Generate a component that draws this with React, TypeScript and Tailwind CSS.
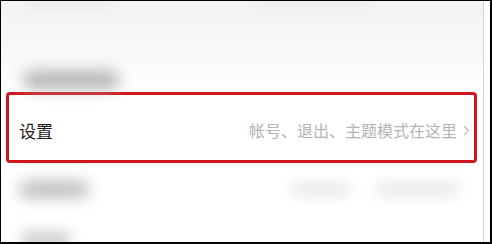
import React from 'react';

const Blob = ({ className }: { className: string }) => (
    <div className={`rounded-full ${className}`} />
);

const App = () => {
    return (
        <div
            className="w-[492px] h-[244px] flex overflow-hidden bg-white border-t border-l border-r-2 border-b-2 border-black"
            style={{ fontFamily: '"Noto Sans CJK SC", "Noto Sans", sans-serif' }}
        >
            <div className="w-[483px] flex flex-col border-r border-[#d4d4d6] bg-white">
                {/* blurred area above */}
                <div className="h-[91px] flex flex-col bg-gradient-to-b from-[#f2f3f5] via-[#f8f8fa] to-white">
                    <div className="flex items-start h-[10px]">
                        <Blob className="ml-[28px] w-[80px] h-[6px] bg-[#e4e4e6] blur-[6px]" />
                        <Blob className="ml-[150px] w-[110px] h-[6px] bg-[#e8e8ea] blur-[6px]" />
                    </div>
                    <Blob className="mt-auto mb-[4px] ml-[22px] w-[96px] h-[16px] bg-[#a8a8aa] blur-[8px]" />
                </div>

                {/* highlighted settings row */}
                <div className="ml-[5px] w-[471px] h-[71px] border-[3px] border-[#cf161c] rounded-[4px] flex items-center justify-between pl-[10px] pr-[4px] pt-[5px]">
                    <span className="text-[17px] text-[#1c1c1e] leading-none">设置</span>
                    <div className="flex items-center gap-[6px]">
                        <span className="text-[16px] text-[#b4b4b6] leading-none">帐号、退出、主题模式在这里</span>
                        <svg width="7" height="11" viewBox="0 0 7 11" fill="none">
                            <path d="M1 1l4.5 4.5L1 10" stroke="#bcbcbe" strokeWidth="1.2" />
                        </svg>
                    </div>
                </div>

                {/* blurred rows below */}
                <div className="mt-[16px] flex items-center h-[20px]">
                    <Blob className="ml-[18px] w-[70px] h-[15px] bg-[#b4b4b6] blur-[8px]" />
                    <Blob className="ml-[202px] w-[60px] h-[12px] bg-[#e6e6e8] blur-[7px]" />
                    <Blob className="ml-[24px] w-[85px] h-[12px] bg-[#e6e6e8] blur-[7px]" />
                </div>
                <div className="mt-auto -mb-[4px] flex">
                    <Blob className="ml-[20px] w-[50px] h-[14px] bg-[#c8c8ca] blur-[7px]" />
                </div>
            </div>
            <div className="flex-1 bg-white" />
        </div>
    );
};

export default App;
